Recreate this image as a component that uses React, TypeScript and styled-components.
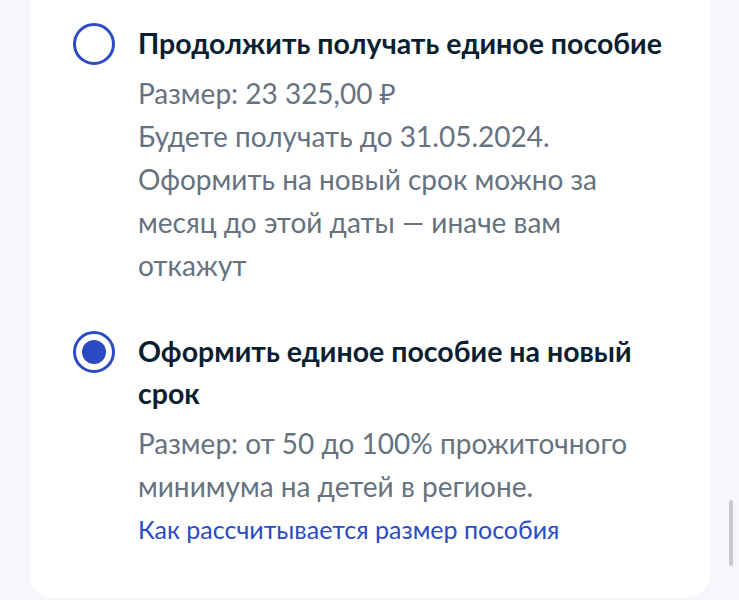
import React from "react";
import styled, { createGlobalStyle } from "styled-components";

const Global = createGlobalStyle`
  html, body { margin: 0; padding: 0; background: #f5f7fb; }
  body { font-family: Lato, "Noto Sans", sans-serif; }
`;

const Page = styled.div`
  width: 739px;
  height: 600px;
  overflow: hidden;
  position: relative;
  background: #f5f7fb;
`;

const Card = styled.div`
  margin: -40px 29px 0 30px;
  padding: 62px 40px 46px 43px;
  background: #ffffff;
  border-radius: 0 0 22px 22px;
  display: flex;
  flex-direction: column;
  gap: 43px;
`;

const Option = styled.div`
  display: grid;
  grid-template-columns: 42px 1fr;
  column-gap: 23px;
  align-items: start;
`;

const Radio = styled.span<{ $checked?: boolean }>`
  box-sizing: border-box;
  width: 42px;
  height: 42px;
  margin-top: 1px;
  border-radius: 50%;
  border: 3px solid #2b4bc4;
  display: flex;
  align-items: center;
  justify-content: center;
  &::after {
    content: "";
    width: 24px;
    height: 24px;
    border-radius: 50%;
    background: #2b4bc4;
    display: ${(p) => (p.$checked ? "block" : "none")};
  }
`;

const Texts = styled.div`
  display: flex;
  flex-direction: column;
`;

const Title = styled.div`
  font-weight: 700;
  font-size: 28.5px;
  line-height: 42px;
  color: #0b1f33;
  margin-bottom: 8px;
`;

const Body = styled.div`
  font-size: 28px;
  line-height: 43px;
  color: #66727f;
`;

const Link = styled.a`
  font-size: 25px;
  line-height: 43px;
  color: #2b4bc4;
  text-decoration: none;
`;

const Scroll = styled.div`
  position: absolute;
  right: 6px;
  top: 500px;
  width: 4px;
  height: 66px;
  border-radius: 2px;
  background: #c7c9cc;
`;

export default function App() {
  return (
    <Page>
      <Global />
      <Card>
        <Option>
          <Radio />
          <Texts>
            <Title>Продолжить получать единое пособие</Title>
            <Body>
              Размер: 23 325,00 ₽
              <br />
              Будете получать до 31.05.2024.
              <br />
              Оформить на новый срок можно за месяц до этой даты — иначе вам откажут
            </Body>
          </Texts>
        </Option>
        <Option>
          <Radio $checked />
          <Texts>
            <Title>Оформить единое пособие на новый срок</Title>
            <Body>Размер: от 50 до 100% прожиточного минимума на детей в регионе.</Body>
            <Link href="#">Как рассчитывается размер пособия</Link>
          </Texts>
        </Option>
      </Card>
      <Scroll />
    </Page>
  );
}
